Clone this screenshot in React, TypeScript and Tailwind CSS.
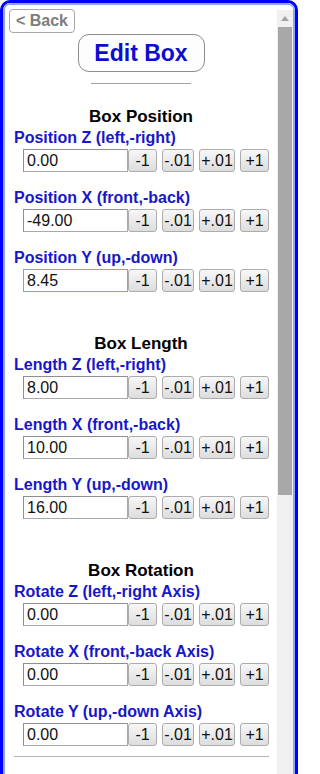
import React from "react";

type Field = { label: string; value: string; focused?: boolean };
type Section = { title: string; fields: Field[] };

const sections: Section[] = [
  {
    title: "Box Position",
    fields: [
      { label: "Position Z (left,-right)", value: "0.00" },
      { label: "Position X (front,-back)", value: "-49.00" },
      { label: "Position Y (up,-down)", value: "8.45", focused: true },
    ],
  },
  {
    title: "Box Length",
    fields: [
      { label: "Length Z (left,-right)", value: "8.00" },
      { label: "Length X (front,-back)", value: "10.00" },
      { label: "Length Y (up,-down)", value: "16.00" },
    ],
  },
  {
    title: "Box Rotation",
    fields: [
      { label: "Rotate Z (left,-right Axis)", value: "0.00" },
      { label: "Rotate X (front,-back Axis)", value: "0.00" },
      { label: "Rotate Y (up,-down Axis)", value: "0.00" },
    ],
  },
];

const btnBase =
  "h-[23px] shrink-0 flex items-center justify-center border border-[#acacac] rounded-[3px] bg-gradient-to-b from-[#f7f7f7] to-[#dddddd] text-[16px] text-[#111] leading-none";

function FieldRow({ field, first }: { field: Field; first: boolean }) {
  return (
    <div className={first ? "mt-[2px]" : "mt-[17px]"}>
      <div className="h-[18px] leading-[18px] pl-[9px] text-[16px] font-bold text-[#1717c9] whitespace-nowrap">
        {field.label}
      </div>
      <div className="mt-[2px] flex pl-[18px]">
        <div
          className={
            "w-[105px] h-[23px] shrink-0 flex items-center pl-[3px] text-[16px] text-[#111] bg-white border " +
            (field.focused
              ? "border-[#7aa7dc]"
              : "border-[#a9a9a9] border-t-[#8f8f8f] border-l-[#8f8f8f]")
          }
        >
          {field.value}
        </div>
        <div className={btnBase + " w-[29px]"}>-1</div>
        <div className={btnBase + " w-[32px] ml-[5px]"}>-.01</div>
        <div className={btnBase + " w-[36px] ml-[5px]"}>+.01</div>
        <div className={btnBase + " w-[29px] ml-[5px]"}>+1</div>
      </div>
    </div>
  );
}

export default function App() {
  return (
    <div
      className="w-[300px] h-[774px] bg-white overflow-hidden"
      style={{ fontFamily: '"Liberation Sans", Arial, sans-serif' }}
    >
      <div className="w-[298px] h-[774px] border-[3px] border-b-0 border-[#0000ff] rounded-t-[10px] overflow-hidden">
        <div className="h-full border-2 border-b-0 border-[#8fa6ff] rounded-t-[7px] flex overflow-hidden bg-white">
          <div className="flex-1 flex flex-col bg-white">
            <div className="ml-[4px] mt-[4px] w-[66px] h-[24px] flex items-center justify-center border border-[#a8a8a8] rounded-[4px] bg-white text-[16px] font-bold text-[#7d7d7d]">
              &lt; Back
            </div>
            <div className="self-center mt-[1px] w-[127px] h-[38px] flex items-center justify-center border border-[#8c8c8c] rounded-[11px] bg-[#fdfdfd] text-[23px] font-bold text-[#0d0dd0]">
              Edit Box
            </div>
            <div className="self-center mt-[11px] w-[100px] h-0 border-t border-[#a3a3a3]" />
            {sections.map((s, si) => (
              <div key={s.title} className={si === 0 ? "mt-[23px]" : "mt-[42px]"}>
                <div className="h-[20px] leading-[20px] text-center text-[17px] font-bold text-black">
                  {s.title}
                </div>
                {s.fields.map((f, fi) => (
                  <FieldRow key={f.label} field={f} first={fi === 0} />
                ))}
              </div>
            ))}
            <div className="mt-[10px] ml-[9px] w-[255px] h-0 border-t border-[#b5b5b5]" />
          </div>
          <div className="w-[16px] flex flex-col bg-white">
            <div className="h-[5px] bg-white" />
            <div className="flex-1 bg-[#f0f0f0] flex flex-col">
              <div className="h-[17px] flex items-center justify-center">
                <svg width="8" height="5" viewBox="0 0 8 5">
                  <polygon points="4,0 8,5 0,5" fill="#a3a3a3" />
                </svg>
              </div>
              <div className="mx-[1px] h-[468px] bg-[#a8a8a8]" />
            </div>
          </div>
        </div>
      </div>
    </div>
  );
}
